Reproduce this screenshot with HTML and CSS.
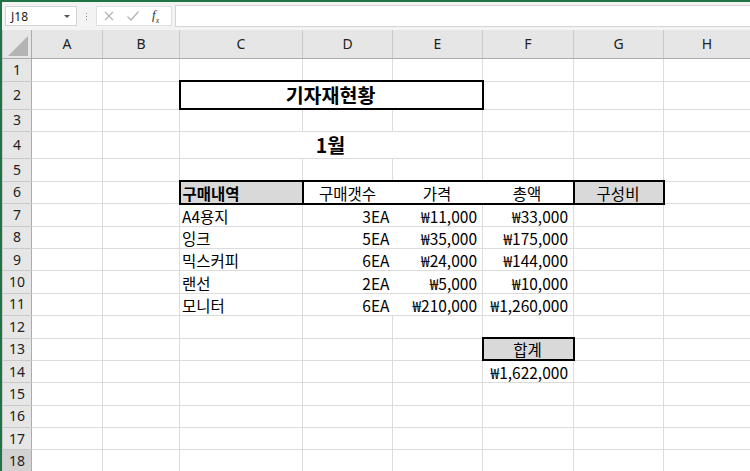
FILE: index.html
```html
<!DOCTYPE html>
<html lang="ko">
<head>
    <meta charset="UTF-8">
    <meta name="viewport" content="width=device-width, initial-scale=1.0">
    <title>기자재현황</title>
    <link rel="stylesheet" href="styles.css">
</head>
<body>
    <div class="window">
        <!-- formula bar -->
        <div class="formula-bar">
            <div class="name-box">J18<span class="caret"></span></div>
            <div class="bar-grip">
                <span></span><span></span><span></span>
            </div>
            <div class="fx-box">
                <svg class="fx-icon" width="12" height="12" viewBox="0 0 12 12">
                    <path d="M2 2 L10 10 M10 2 L2 10" stroke="#b3b3b3" stroke-width="1.2" fill="none"/>
                </svg>
                <svg class="fx-icon" width="14" height="12" viewBox="0 0 14 12">
                    <path d="M1.5 6.5 L5 10 L12.5 1.5" stroke="#b3b3b3" stroke-width="1.3" fill="none"/>
                </svg>
                <span class="fx-label">f<sub>x</sub></span>
            </div>
            <div class="formula-input"></div>
        </div>

        <!-- sheet -->
        <table class="sheet">
            <colgroup>
                <col class="w-head">
                <col class="w-a">
                <col class="w-b">
                <col class="w-c">
                <col class="w-d">
                <col class="w-e">
                <col class="w-f">
                <col class="w-g">
                <col class="w-h">
            </colgroup>
            <tr class="col-heads">
                <th class="corner"><span class="corner-mark"></span></th>
                <th>A</th><th>B</th><th>C</th><th>D</th><th>E</th><th>F</th><th>G</th><th>H</th>
            </tr>
            <tr class="row-1">
                <th>1</th><td></td><td></td><td></td><td></td><td></td><td></td><td></td><td></td>
            </tr>
            <tr class="row-title">
                <th>2</th><td></td><td></td>
                <td colspan="3" class="title">기자재현황</td>
                <td></td><td></td><td></td>
            </tr>
            <tr>
                <th>3</th><td></td><td></td><td></td><td></td><td></td><td></td><td></td><td></td>
            </tr>
            <tr class="row-month">
                <th>4</th><td></td><td></td>
                <td colspan="3" class="month">1월</td>
                <td></td><td></td><td></td>
            </tr>
            <tr>
                <th>5</th><td></td><td></td><td></td><td></td><td></td><td></td><td></td><td></td>
            </tr>
            <tr>
                <th>6</th><td></td><td></td>
                <td class="box label-cell">구매내역</td>
                <td class="head-mid head-first center">구매갯수</td>
                <td class="head-mid center">가격</td>
                <td class="head-mid head-last center">총액</td>
                <td class="box shade center">구성비</td>
                <td></td>
            </tr>
            <tr>
                <th>7</th><td></td><td></td>
                <td>A4용지</td><td class="num no-right">3EA</td><td class="num">₩11,000</td><td class="num">₩33,000</td>
                <td></td><td></td>
            </tr>
            <tr>
                <th>8</th><td></td><td></td>
                <td>잉크</td><td class="num no-right">5EA</td><td class="num">₩35,000</td><td class="num">₩175,000</td>
                <td></td><td></td>
            </tr>
            <tr>
                <th>9</th><td></td><td></td>
                <td>믹스커피</td><td class="num no-right">6EA</td><td class="num">₩24,000</td><td class="num">₩144,000</td>
                <td></td><td></td>
            </tr>
            <tr>
                <th>10</th><td></td><td></td>
                <td>랜선</td><td class="num no-right">2EA</td><td class="num">₩5,000</td><td class="num">₩10,000</td>
                <td></td><td></td>
            </tr>
            <tr>
                <th>11</th><td></td><td></td>
                <td>모니터</td><td class="num no-right">6EA</td><td class="num">₩210,000</td><td class="num">₩1,260,000</td>
                <td></td><td></td>
            </tr>
            <tr>
                <th>12</th><td></td><td></td><td></td><td></td><td></td><td></td><td></td><td></td>
            </tr>
            <tr>
                <th>13</th><td></td><td></td><td></td><td></td><td></td>
                <td class="box shade center">합계</td>
                <td></td><td></td>
            </tr>
            <tr>
                <th>14</th><td></td><td></td><td></td><td></td><td></td>
                <td class="num">₩1,622,000</td>
                <td></td><td></td>
            </tr>
            <tr>
                <th>15</th><td></td><td></td><td></td><td></td><td></td><td></td><td></td><td></td>
            </tr>
            <tr>
                <th>16</th><td></td><td></td><td></td><td></td><td></td><td></td><td></td><td></td>
            </tr>
            <tr>
                <th>17</th><td></td><td></td><td></td><td></td><td></td><td></td><td></td><td></td>
            </tr>
            <tr>
                <th class="active">18</th><td></td><td></td><td></td><td></td><td></td><td></td><td></td><td></td>
            </tr>
        </table>
    </div>
</body>
</html>
```

FILE: styles.css
```css
body {
    margin: 0;
    width: 750px;
    height: 471px;
    overflow: hidden;
    background: #fff;
    font-family: "Noto Sans", "Noto Sans CJK KR", sans-serif;
}

.window {
    height: 100%;
    border-top: 2px solid #217346;
    border-left: 2px solid #217346;
    box-sizing: border-box;
}

/* formula bar */
.formula-bar {
    display: flex;
    align-items: center;
    height: 28px;
    background: #f3f3f3;
    box-sizing: border-box;
    padding-left: 3px;
}

.name-box {
    display: flex;
    align-items: center;
    justify-content: space-between;
    width: 72px;
    height: 20px;
    box-sizing: border-box;
    padding: 0 6px 0 5px;
    background: #fff;
    border: 1px solid #d4d4d4;
    font-size: 12px;
    color: #222;
}

.caret {
    width: 0;
    height: 0;
    border-left: 3px solid transparent;
    border-right: 3px solid transparent;
    border-top: 3px solid #555;
}

.bar-grip {
    display: flex;
    flex-direction: column;
    gap: 2px;
    width: 19px;
    align-items: center;
}

.bar-grip span {
    width: 1px;
    height: 1px;
    background: #888;
}

.fx-box {
    display: flex;
    align-items: center;
    width: 76px;
    height: 20px;
    box-sizing: border-box;
    padding-left: 6px;
    gap: 11px;
    background: #fff;
    border: 1px solid #e1e1e1;
}

.fx-label {
    font-family: "Liberation Serif", serif;
    font-style: italic;
    font-size: 13px;
    color: #333;
    margin-left: 1px;
}

.fx-label sub {
    font-size: 8px;
}

.formula-input {
    flex: 1;
    height: 20px;
    margin-left: 3px;
    background: #fff;
    border: 1px solid #d4d4d4;
    border-right: none;
}

/* sheet grid */
.sheet {
    table-layout: fixed;
    width: 748px;
    border-collapse: collapse;
    font-family: "Noto Sans CJK KR", sans-serif;
    font-size: 15.5px;
    color: #000;
}

.w-head { width: 29px; }
.w-a { width: 71px; }
.w-b { width: 77px; }
.w-c { width: 123px; }
.w-d { width: 90px; }
.w-e { width: 90px; }
.w-f { width: 91px; }
.w-g { width: 90px; }
.w-h { width: 87px; }

.sheet tr {
    height: 22.4px;
}

.sheet td {
    border: 1px solid #dcdcdc;
    padding: 0 3px 0 2px;
    vertical-align: bottom;
    line-height: 20px;
    white-space: nowrap;
    overflow: hidden;
}

.sheet th {
    background: #e6e6e6;
    border: 1px solid #c9c9c9;
    font-family: "Noto Sans", sans-serif;
    font-weight: normal;
    font-size: 14px;
    color: #222;
    padding: 0;
    line-height: 20px;
}

.sheet tr th:first-child {
    border-right: 1px solid #ababab;
}

.sheet tr.col-heads {
    height: 28px;
}

.col-heads th {
    border-top: none;
    border-bottom: 1px solid #ababab;
}

.corner {
    vertical-align: bottom;
}

.corner-mark {
    display: block;
    width: 0;
    height: 0;
    margin: 0 3px 2px auto;
    border-left: 20px solid transparent;
    border-bottom: 20px solid #b4b4b4;
}

.sheet tr.row-1 { height: 23px; }
.sheet tr.row-title { height: 28px; }
.sheet tr.row-month { height: 27.5px; }

.sheet th.active {
    background: #d2d2d2;
    border-right: 2px solid #217346;
    color: #1d1d1d;
}

/* cell formats */
.sheet td.title {
    border: 2px solid #000;
    text-align: center;
    font-weight: bold;
    font-size: 19.5px;
    line-height: 26px;
}

.sheet td.month {
    text-align: center;
    font-weight: bold;
    font-size: 19.5px;
    line-height: 26px;
}

.sheet td.box {
    border: 2px solid #000;
}

.shade {
    background: #d9d9d9;
}

.label-cell {
    background: #d9d9d9;
    font-weight: bold;
}

.sheet td.head-mid {
    border-top: 2px solid #000;
    border-bottom: 2px solid #000;
    border-right-style: hidden;
}

.sheet td.head-first {
    border-left: 2px solid #000;
}

.sheet td.head-last {
    border-right: 2px solid #000;
}

.center {
    text-align: center;
}

.sheet td.num {
    text-align: right;
    padding-right: 5px;
}

.sheet td.no-right {
    border-right-style: hidden;
    padding-right: 3px;
}
```
